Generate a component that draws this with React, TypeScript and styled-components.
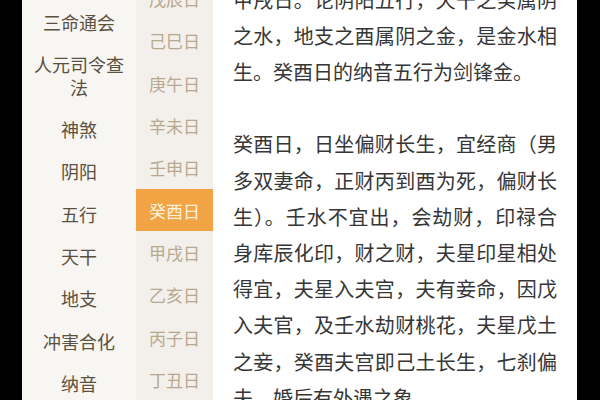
import React, { FC } from 'react'
import styled, { createGlobalStyle } from 'styled-components'

const GlobalStyle = createGlobalStyle`
  html, body {
    margin: 0;
    padding: 0;
    background: #000;
  }
  body {
    font-family: "Noto Sans CJK SC", "Noto Sans", sans-serif;
  }
`

const Screen = styled.div`
  width: 600px;
  height: 400px;
  display: flex;
  overflow: hidden;
  background: #000;
`

const Gutter = styled.div<{ $w: number }>`
  flex: 0 0 ${p => p.$w}px;
  background: #000;
`

const CategoryMenu = styled.ul`
  flex: 0 0 114px;
  margin: 0;
  padding: 1px 0 0;
  list-style: none;
  background: #f7f6f3;
`

const CategoryItem = styled.li`
  padding: 9.65px 6px;
  font-size: 18px;
  line-height: 23px;
  text-align: center;
  color: #5c513f;
`

const DayMenu = styled.ul`
  flex: 0 0 77px;
  margin: 0;
  padding: 0;
  list-style: none;
  background: #f3f0eb;
`

const DayList = styled.div`
  margin-top: -22.5px;
`

const DayItem = styled.li<{ $active?: boolean }>`
  height: 42.3px;
  display: flex;
  align-items: center;
  justify-content: center;
  font-size: 17px;
  color: ${p => (p.$active ? '#fdf1de' : '#b8a88f')};
  background: ${p => (p.$active ? '#f2a445' : 'transparent')};
`

const Article = styled.div`
  flex: 1;
  background: #fff;
  padding: 0 20px;
  overflow: hidden;
`

const ArticleBody = styled.div`
  margin-top: -18.5px;
`

const Paragraph = styled.p`
  margin: 0 0 36.2px;
  font-size: 20px;
  line-height: 36.2px;
  color: #363636;
  text-align: justify;
`

const categories = [
  '三命通会',
  '人元司令查法',
  '神煞',
  '阴阳',
  '五行',
  '天干',
  '地支',
  '冲害合化',
  '纳音',
]

const days = [
  '戊辰日',
  '己巳日',
  '庚午日',
  '辛未日',
  '壬申日',
  '癸酉日',
  '甲戌日',
  '乙亥日',
  '丙子日',
  '丁丑日',
]

const paragraphs = [
  '甲戌日。论阴阳五行，天干之癸属阴之水，地支之酉属阴之金，是金水相生。癸酉日的纳音五行为剑锋金。',
  '癸酉日，日坐偏财长生，宜经商（男多双妻命，正财丙到酉为死，偏财长生）。壬水不宜出，会劫财，印禄合身库辰化印，财之财，夫星印星相处得宜，夫星入夫宫，夫有妾命，因戊入夫官，及壬水劫财桃花，夫星戊土之妾，癸酉夫宫即己土长生，七刹偏夫，婚后有外遇之象。',
]

const ACTIVE_DAY = '癸酉日'

const App: FC = () => {
  return (
    <>
      <GlobalStyle />
      <Screen>
        <Gutter $w={22} />
        <CategoryMenu>
          {categories.map(name => (
            <CategoryItem key={name}>{name}</CategoryItem>
          ))}
        </CategoryMenu>
        <DayMenu>
          <DayList>
            {days.map(day => (
              <DayItem key={day} $active={day === ACTIVE_DAY}>
                {day}
              </DayItem>
            ))}
          </DayList>
        </DayMenu>
        <Article>
          <ArticleBody>
            {paragraphs.map((text, i) => (
              <Paragraph key={i}>{text}</Paragraph>
            ))}
          </ArticleBody>
        </Article>
        <Gutter $w={23} />
      </Screen>
    </>
  )
}

export default App
